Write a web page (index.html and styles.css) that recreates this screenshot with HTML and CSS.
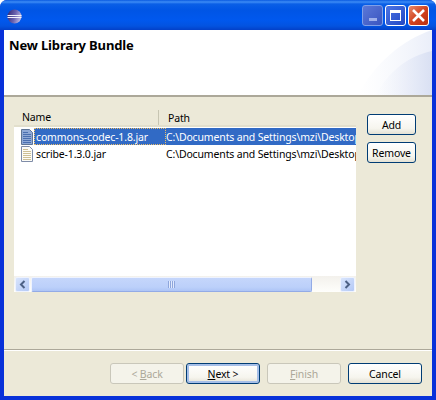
FILE: index.html
```html
<!DOCTYPE html>
<html lang="en">
<head>
    <meta charset="UTF-8">
    <title>New Library Bundle</title>
    <link rel="stylesheet" href="styles.css">
</head>
<body>
    <div class="window">
        <div class="titlebar">
            <svg class="app-icon" width="15" height="15" viewBox="0 0 15 15">
                <defs>
                    <linearGradient id="sphere" x1="0" y1="0" x2="1" y2="0.3">
                        <stop offset="0" stop-color="#2c2470"/>
                        <stop offset="0.6" stop-color="#6a62b0"/>
                        <stop offset="1" stop-color="#b4b0de"/>
                    </linearGradient>
                </defs>
                <circle cx="7.5" cy="7.5" r="7" fill="url(#sphere)"/>
                <rect x="0.5" y="6" width="14" height="1" fill="#f2f2fa"/>
                <rect x="0.5" y="8" width="14" height="1" fill="#f2f2fa"/>
            </svg>
            <div class="controls">
                <div class="ctl ctl-min"><span class="min-bar"></span></div>
                <div class="ctl ctl-max"><span class="max-box"></span></div>
                <div class="ctl ctl-close">
                    <svg width="15" height="15" viewBox="0 0 15 15">
                        <path d="M2 2 L13 13 M13 2 L2 13" stroke="#fff" stroke-width="2.6" fill="none"/>
                    </svg>
                </div>
            </div>
        </div>
        <div class="client">
            <div class="banner">
                <h1 class="banner-title">New Library Bundle</h1>
                <svg class="swoosh" width="96" height="65" viewBox="0 0 96 65">
                    <defs>
                        <linearGradient id="sw1" x1="0" y1="0" x2="1" y2="0">
                            <stop offset="0" stop-color="#f4f6fc" stop-opacity="0"/>
                            <stop offset="1" stop-color="#eaeef9"/>
                        </linearGradient>
                        <linearGradient id="sw2" x1="0" y1="0" x2="1" y2="0">
                            <stop offset="0" stop-color="#eef1fa" stop-opacity="0"/>
                            <stop offset="1" stop-color="#d9e0f3"/>
                        </linearGradient>
                    </defs>
                    <path d="M22 65 C38 34 66 10 96 0 V65 Z" fill="url(#sw1)"/>
                    <path d="M40 65 C52 42 72 26 96 21 V65 Z" fill="url(#sw2)"/>
                </svg>
            </div>
            <div class="main">
                <div class="table">
                    <div class="table-head">
                        <div class="col-name">Name</div>
                        <div class="col-path">Path</div>
                    </div>
                    <div class="table-rows">
                        <div class="row row-selected">
                            <svg class="file-icon" width="12" height="16" viewBox="0 0 12 16">
                                <path d="M.5 .5 H8.5 L11.5 3.5 V15.5 H.5 Z" fill="#8fa9d6" stroke="#5f7596"/>
                                <path d="M2 3.5 H7 M2 5.5 H10 M2 7.5 H10 M2 9.5 H10 M2 11.5 H10 M2 13.5 H10" stroke="#4a6fb0"/>
                            </svg>
                            <span class="cell-name">commons-codec-1.8.jar</span>
                            <span class="cell-path">C:\Documents and Settings\mzi\Desktop\lib</span>
                        </div>
                        <div class="row">
                            <svg class="file-icon" width="12" height="16" viewBox="0 0 12 16">
                                <path d="M.5 .5 H8.5 L11.5 3.5 V15.5 H.5 Z" fill="#fdfcf6" stroke="#7f8ca8"/>
                                <path d="M2 3.5 H7 M2 5.5 H10 M2 7.5 H10 M2 9.5 H10 M2 11.5 H10 M2 13.5 H10" stroke="#cdbf95"/>
                            </svg>
                            <span class="cell-name">scribe-1.3.0.jar</span>
                            <span class="cell-path">C:\Documents and Settings\mzi\Desktop\lib</span>
                        </div>
                    </div>
                    <div class="scrollbar">
                        <div class="sb-btn sb-left">
                            <svg width="9" height="9" viewBox="0 0 9 9"><path d="M6.5 1 L3 4.5 L6.5 8" stroke="#4d6185" stroke-width="2" fill="none"/></svg>
                        </div>
                        <div class="sb-thumb"><span class="grip"></span></div>
                        <div class="sb-track"></div>
                        <div class="sb-btn sb-right">
                            <svg width="9" height="9" viewBox="0 0 9 9"><path d="M2.5 1 L6 4.5 L2.5 8" stroke="#4d6185" stroke-width="2" fill="none"/></svg>
                        </div>
                    </div>
                </div>
                <div class="side-buttons">
                    <button class="btn btn-side">Add</button>
                    <button class="btn btn-side">Remove</button>
                </div>
            </div>
            <div class="footer">
                <button class="btn btn-disabled">&lt; <u>B</u>ack</button>
                <button class="btn btn-default"><u>N</u>ext &gt;</button>
                <button class="btn btn-disabled btn-finish"><u>F</u>inish</button>
                <button class="btn btn-cancel">Cancel</button>
            </div>
        </div>
    </div>
</body>
</html>
```

FILE: styles.css
```css
html, body {
    margin: 0;
    padding: 0;
}
body {
    font-family: "Noto Sans", "Liberation Sans", sans-serif;
    font-size: 10.5px;
    letter-spacing: -0.15px;
    color: #000;
}
.window {
    width: 436px;
    height: 400px;
    display: flex;
    flex-direction: column;
    overflow: hidden;
    background: #0831d9;
    border-radius: 7px 7px 0 0;
}
.titlebar {
    height: 30px;
    flex: none;
    display: flex;
    align-items: center;
    justify-content: space-between;
    padding: 3px 7px 0 7px;
    box-sizing: border-box;
    background: linear-gradient(to bottom, #0a5ae0 0, #3d8cf5 2px, #0a5fe6 4px, #0055e5 10px, #0058ee 20px, #0353e0 26px, #0340c8 30px);
}
.controls {
    display: flex;
    gap: 2px;
    margin-top: -3px;
}
.ctl {
    width: 21px;
    height: 21px;
    box-sizing: border-box;
    border: 1px solid #fff;
    border-radius: 3px;
    display: flex;
    align-items: center;
    justify-content: center;
}
.ctl-min {
    border-color: #7f9fe8;
    background: linear-gradient(135deg, #5b78d8, #3a55c0);
}
.min-bar {
    width: 8px;
    height: 3px;
    margin-top: 8px;
    background: #9fb0ea;
}
.ctl-max {
    background: linear-gradient(135deg, #4d75e4, #2248c4);
}
.max-box {
    width: 11px;
    height: 11px;
    box-sizing: border-box;
    border: 1px solid #fff;
    border-top-width: 3px;
}
.ctl-close {
    background: linear-gradient(135deg, #e88a6a, #d2431f 50%, #b83010);
}
.client {
    flex: 1;
    margin: 0 4px 4px;
    display: flex;
    flex-direction: column;
    background: #ece9d8;
}
.banner {
    height: 67px;
    flex: none;
    box-sizing: border-box;
    position: relative;
    border-bottom: 2px solid #aca899;
    background: #fff;
}
.banner-title {
    margin: 0;
    padding: 7px 0 0 5px;
    font-size: 13px;
    line-height: 16px;
    font-weight: bold;
}
.swoosh {
    position: absolute;
    right: 0;
    bottom: 0;
}
.main {
    flex: 1;
    display: flex;
    align-items: flex-start;
    padding: 11px 6px 0 10px;
}
.table {
    width: 342px;
    height: 184px;
    flex: none;
    display: flex;
    flex-direction: column;
    background: #fff;
}
.table-head {
    height: 19px;
    flex: none;
    display: flex;
    align-items: center;
    background: #ece9d8;
    box-shadow: inset 0 -2px 0 #e2dfcc;
}
.col-name {
    width: 145px;
    box-sizing: border-box;
    padding-left: 8px;
    border-right: 1px solid #c7c5b2;
    line-height: 15px;
}
.col-path {
    padding-left: 9px;
}
.table-rows {
    flex: 1;
    overflow: hidden;
    padding-top: 1px;
}
.row {
    height: 17px;
    display: flex;
    align-items: center;
    white-space: nowrap;
    overflow: hidden;
}
.row-selected {
    background: linear-gradient(to right, #fff 20px, #316ac5 20px);
    color: #fff;
}
.file-icon {
    flex: none;
    margin-left: 7px;
}
.cell-name {
    width: 132px;
    height: 100%;
    flex: none;
    display: flex;
    align-items: center;
    margin-left: 1px;
    padding-left: 2px;
    box-sizing: border-box;
}
.row-selected .cell-name {
    outline: 1px dotted #e8bc6a;
    outline-offset: -1px;
}
.scrollbar {
    height: 16px;
    flex: none;
    display: flex;
    align-items: center;
    background: linear-gradient(to bottom, #f3f1ec, #fefefb);
}
.sb-btn {
    width: 15px;
    height: 15px;
    flex: none;
    box-sizing: border-box;
    display: flex;
    align-items: center;
    justify-content: center;
    border: 1px solid #eef3ff;
    border-radius: 2px;
    background: linear-gradient(135deg, #d8e4fc, #b4c9f6);
}
.sb-left {
    margin-left: 1px;
}
.sb-right {
    margin-right: 1px;
}
.sb-thumb {
    width: 281px;
    height: 15px;
    flex: none;
    margin-left: 1px;
    box-sizing: border-box;
    display: flex;
    align-items: center;
    justify-content: center;
    border: 1px solid #eef3ff;
    border-right-color: #93abe6;
    border-bottom-color: #93abe6;
    border-radius: 2px;
    background: linear-gradient(to bottom, #c5d6fb, #bcd0fa 70%, #aec5f6);
}
.grip {
    width: 7px;
    height: 7px;
    background: repeating-linear-gradient(to right, #8ea6dc 0, #8ea6dc 1px, #e2eafd 1px, #e2eafd 2px);
}
.sb-track {
    flex: 1;
}
.side-buttons {
    margin-left: 11px;
    padding-top: 6px;
    display: flex;
    flex-direction: column;
    gap: 7px;
}
.btn {
    font-family: inherit;
    font-size: inherit;
    letter-spacing: inherit;
    color: #000;
    margin: 0;
    padding: 0;
    height: 21px;
    box-sizing: border-box;
    border: 1px solid #003c74;
    border-radius: 3px;
    background: linear-gradient(to bottom, #ffffff, #f6f5ee 70%, #e4e1d4);
}
.btn-side {
    width: 49px;
}
.footer {
    height: 47px;
    flex: none;
    box-sizing: border-box;
    border-top: 1px solid #aca899;
    box-shadow: inset 0 1px 0 #fff;
    display: flex;
    padding: 13px 10px 0 106px;
}
.footer .btn {
    width: 74px;
}
.footer .btn-default {
    margin-left: 2px;
    box-shadow: inset 0 0 0 2px #a6bfe8;
}
.footer .btn-disabled {
    color: #aca899;
    border-color: #c9c7ba;
    background: #f4f3ea;
}
.footer .btn-finish {
    margin-left: 7px;
}
.footer .btn-cancel {
    margin-left: 7px;
}
```
